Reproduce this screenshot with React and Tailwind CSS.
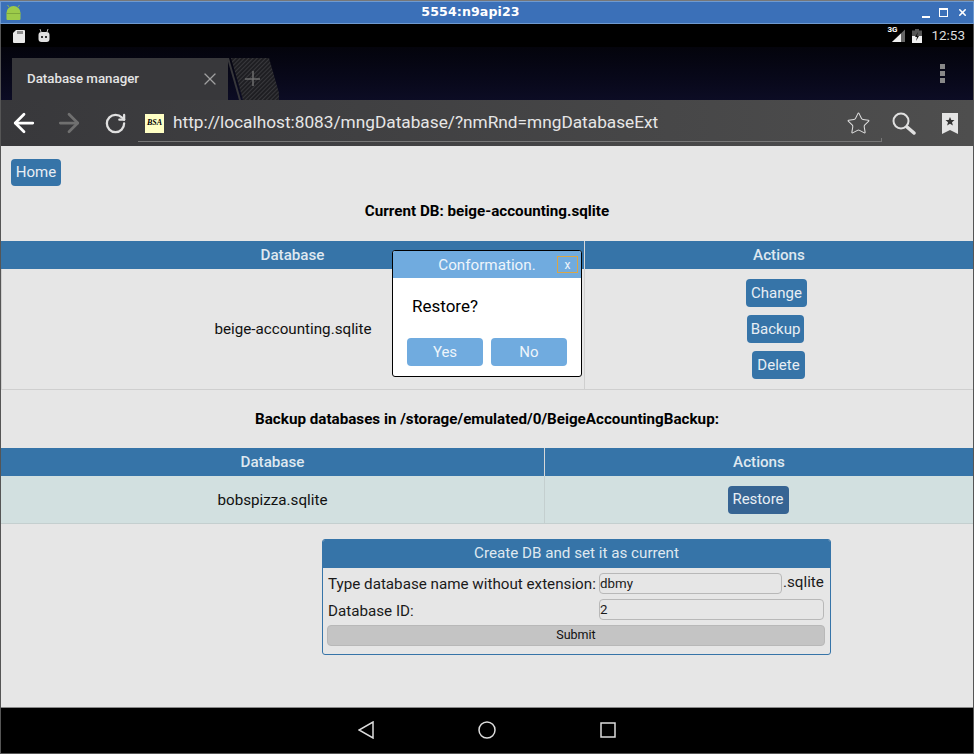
import { X, ArrowLeft, ArrowRight, RotateCw, Star } from 'lucide-react'

const ROBOTO = 'font-[Roboto,sans-serif]'

function BlueButton({ children, className = '' }) {
  return (
    <button className={`rounded-[4px] bg-[#3674a8] text-[15px] leading-none text-[#e8eef4] ${className}`}>
      {children}
    </button>
  )
}

function TitleBar() {
  return (
    <div className="flex h-[23px] items-center border border-[#6f9ad0] bg-[#3b70b8] pl-[5px] pr-[5px]">
      <svg width="15" height="15" viewBox="0 0 15 15" className="shrink-0">
        <path d="M0.500 14V8a7 7 0 0 1 14 0v6a1 1 0 0 1-1 1h-12a1 1 0 0 1-1-1z" fill="#9ccb4a" />
        <path d="M3 2L1.500 0M12 2l1.500-2" stroke="#8fb84a" strokeWidth="1" />
        <rect x="0.500" y="8" width="14" height="1" fill="#7ea83c" />
      </svg>
      <div className="flex-1 pr-[2px] text-center font-['DejaVu_Sans',sans-serif] text-[12.600px] font-bold tracking-[0.1px] text-white">
        5554:n9api23
      </div>
      <div className="flex items-center gap-[9px]">
        <span className="mt-[8px] h-[2px] w-[8px] bg-white" />
        <span className="h-[9px] w-[9px] border border-t-2 border-white" />
        <X size={11} strokeWidth={3.5} className="text-white" />
      </div>
    </div>
  )
}

function StatusBar() {
  return (
    <div className="flex h-[23px] items-center bg-black pl-[12px] pr-[8px]">
      <svg width="12" height="14" viewBox="0 0 12 14" className="mr-[13px]">
        <path d="M3 1h8a1 1 0 0 1 1 1v11a1 1 0 0 1-1 1H1a1 1 0 0 1-1-1V4z" fill="#e8e8e8" />
        <path d="M5 2v3M7 2v3M9 2v3" stroke="#333" strokeWidth="1" />
      </svg>
      <svg width="12" height="14" viewBox="0 0 12 14">
        <path d="M2 0l1 3M10 0L9 3" stroke="#bbb" strokeWidth="1" />
        <rect x="0.500" y="3" width="11" height="10" rx="3" fill="#e0e0e0" />
        <rect x="3" y="7" width="2" height="2" fill="#333" />
        <rect x="7" y="7" width="2" height="2" fill="#333" />
      </svg>
      <div className="ml-auto flex items-center">
        <span className="relative mr-[7px] block h-[15px] w-[17px]">
          <svg width="17" height="15" viewBox="0 0 17 15" className="absolute inset-0">
            <path d="M17 1.500V14H4z" fill="#666" />
            <path d="M13 5.500V14H4z" fill="#f0f0f0" />
          </svg>
          <span className="absolute -top-[2px] -left-[1px] text-[8px] font-bold leading-none text-white">3G</span>
        </span>
        <svg width="10" height="14" viewBox="0 0 10 14" className="mr-[9px]">
          <path d="M3 0h4v1.500h3V14H0V1.500h3z" fill="#555" />
          <rect y="7" width="10" height="7" fill="#f0f0f0" />
          <path d="M6 3L3 8h2l-1 4 3-5H5z" fill="#111" />
        </svg>
        <span className={`${ROBOTO} text-[13.500px] text-[#dcdcdc]`}>12:53</span>
      </div>
    </div>
  )
}

function TabStrip() {
  return (
    <div className="flex h-[53px] items-end bg-gradient-to-b from-[#04040c] to-[#0c0c24] pl-[11px] pr-[28px]">
      <div className="flex h-[42px] w-[216px] items-center bg-[#38383b] pl-[15px] pr-[8px]">
        <span className={`${ROBOTO} text-[13.300px] font-medium text-[#e4e4e4]`}>Database manager</span>
        <X size={20} strokeWidth={1.5} className="ml-auto text-[#a0a0a0]" />
      </div>
      <svg width="52" height="42" viewBox="0 0 52 42" className="-ml-[1px] shrink-0">
        <defs>
          <pattern id="hatch" width="3" height="3" patternUnits="userSpaceOnUse" patternTransform="rotate(45)">
            <rect width="3" height="3" fill="#1e1e22" />
            <rect width="1" height="3" fill="#38383c" />
          </pattern>
        </defs>
        <path d="M0 0h2L14 42H12z" fill="#38383b" />
        <path d="M4 0h38l12 42H16z" fill="url(#hatch)" />
        <path d="M26 13v15M18 21h15" stroke="#6e6e6e" strokeWidth="1.500" />
      </svg>
      <div className="mb-[17px] ml-auto flex flex-col gap-[2px]">
        <span className="h-[5px] w-[5px] bg-[#888]" />
        <span className="h-[5px] w-[5px] bg-[#888]" />
        <span className="h-[5px] w-[5px] bg-[#888]" />
      </div>
    </div>
  )
}

function Toolbar() {
  return (
    <div className="flex h-[46px] items-center bg-gradient-to-r from-[#38383b] to-[#4e4e4e] pl-[8px]">
      <ArrowLeft size={30} strokeWidth={2.2} className="text-white" />
      <ArrowRight size={30} strokeWidth={2.2} className="ml-[15px] text-[#707070]" />
      <RotateCw size={23} strokeWidth={2.4} className="ml-[20px] text-[#e0e0e0]" />
      <div className="relative ml-[11px] flex h-[42px] w-[744px] items-center self-start border-b border-[#777] pl-[7px] pt-[5px]">
        <span className="flex h-[19px] w-[19px] items-center justify-center bg-[#ffffc4] font-['Liberation_Serif',serif] text-[8px] font-bold italic text-black">
          BSA
        </span>
        <span className={`${ROBOTO} ml-[9px] text-[17.250px] text-[#e6e6e6]`}>
          http://localhost:8083/mngDatabase/?nmRnd=mngDatabaseExt
        </span>
        <Star size={25} strokeWidth={1} className="ml-auto mr-[11px] text-[#ddd]" />
        <span className="absolute bottom-0 right-0 h-[3px] w-px bg-[#777]" />
      </div>
      <svg width="24" height="23" viewBox="0 0 24 23" className="ml-[10px]">
        <circle cx="9" cy="9" r="7.500" fill="none" stroke="#e0e0e0" strokeWidth="2" />
        <path d="M15 15l7 6" stroke="#e0e0e0" strokeWidth="3.500" strokeLinecap="round" />
      </svg>
      <svg width="16" height="21" viewBox="0 0 16 21" className="ml-[26px]">
        <path d="M0 0h16v21l-8-4-8 4z" fill="#e4e4e4" />
        <path d="M8 4l1.300 3h3.200l-2.500 2.200.9 3.300L8 10.700l-2.900 1.800.9-3.300L3.500 7h3.200z" fill="#333" />
      </svg>
    </div>
  )
}

function Modal() {
  return (
    <div className="absolute left-[392px] top-[250px] w-[190px] overflow-hidden rounded-[3px] border border-black bg-white">
      <div className="relative flex h-[27px] items-center justify-center bg-[#70abdf] pt-[1px] text-[15.200px] text-[#eef5fb]">
        Conformation.
        <span className="absolute right-[3px] top-[5px] flex h-[17px] w-[21px] items-center justify-center border border-[#d9a648] text-[12px] leading-none">
          x
        </span>
      </div>
      <div className="px-[19px] pb-[22px] pt-[19px] text-[17px] leading-[19px] text-black">Restore?</div>
      <div className="flex gap-[8px] pb-[10px] pl-[14px]">
        <button className="h-[28px] w-[76px] rounded-[4px] bg-[#70abdf] text-[15px] text-[#eef5fb]">Yes</button>
        <button className="h-[28px] w-[76px] rounded-[4px] bg-[#70abdf] text-[15px] text-[#eef5fb]">No</button>
      </div>
    </div>
  )
}

function CreateForm() {
  return (
    <div className="ml-[321px] mt-[15px] w-[509px] overflow-hidden rounded-[3px] border border-[#3674a8] text-[15.200px] text-[#1a1a1a]">
      <div className="flex h-[28px] items-center justify-center bg-[#3674a8] pb-[2px] text-[#dfe8f0]">
        Create DB and set it as current
      </div>
      <div className="pb-[8px] pl-[4px] pr-[5px] pt-[5px]">
        <div className="flex h-[21px] items-center pl-[1px] pr-[1px]">
          <span className="mt-[2px] w-[271px] whitespace-nowrap">Type database name without extension:</span>
          <span className="flex h-[21px] w-[183px] items-center rounded-[4px] border border-[#b8b8b8] text-[13.300px]">
            dbmy
          </span>
          <span className="-mt-[2px] ml-[1px]">.sqlite</span>
        </div>
        <div className="mt-[5px] flex h-[21px] items-center pl-[1px]">
          <span className="mt-[3px] w-[271px]">Database ID:</span>
          <span className="flex h-[21px] w-[225px] items-center rounded-[4px] border border-[#b8b8b8] text-[13.300px]">
            2
          </span>
        </div>
        <button className="mt-[5px] h-[21px] w-full rounded-[4px] border border-[#b8b8b8] bg-[#c4c4c4] text-[12.500px] text-[#111]">
          Submit
        </button>
      </div>
    </div>
  )
}

function Header({ left, right, leftWidth }) {
  return (
    <div className="flex h-[28px] bg-[#3674a8] text-[15.200px] font-medium text-[#dfe8f0]">
      <div className={`flex items-center justify-center border-r border-[#d8d8d8] ${leftWidth}`}>{left}</div>
      <div className="flex flex-1 items-center justify-center">{right}</div>
    </div>
  )
}

export default function App() {
  return (
    <div className={`${ROBOTO} relative h-[754px] w-[974px] overflow-hidden bg-black`}>
      <div className="border-t border-[#777]">
        <TitleBar />
      </div>
      <div className="border-x border-[#555]">
        <StatusBar />
        <TabStrip />
        <Toolbar />
        <div className="h-[562px] border-b border-[#888] bg-[#e6e6e6] pt-[13px]">
          <BlueButton className="ml-[10px] h-[27px] w-[50px]">Home</BlueButton>
          <p className="mt-[17px] text-center text-[15.200px] font-bold leading-[17px] text-black">
            Current DB: beige-accounting.sqlite
          </p>
          <div className="mt-[21px] border-b border-[#cfcfcf]">
            <Header left="Database" right="Actions" leftWidth="w-[584px]" />
            <div className="flex h-[120px] border-l border-[#cfcfcf] text-[15.200px] text-[#111]">
              <div className="flex w-[582px] items-center justify-center">beige-accounting.sqlite</div>
              <div className="flex flex-1 flex-col border-l border-[#cfcfcf] pt-[10px]">
                <BlueButton className="ml-[161px] h-[28px] w-[61px]">Change</BlueButton>
                <BlueButton className="ml-[162px] mt-[8px] h-[28px] w-[57px]">Backup</BlueButton>
                <BlueButton className="ml-[167px] mt-[8px] h-[28px] w-[53px]">Delete</BlueButton>
              </div>
            </div>
          </div>
          <p className="mt-[21px] text-center text-[15.200px] font-bold leading-[17px] text-black">
            Backup databases in /storage/emulated/0/BeigeAccountingBackup:
          </p>
          <div className="mt-[20px] border-b border-[#c4cfcf]">
            <Header left="Database" right="Actions" leftWidth="w-[544px]" />
            <div className="flex h-[47px] bg-[#d2e0e0] text-[15.200px] text-[#111]">
              <div className="flex w-[543px] items-center justify-center pt-[1px]">bobspizza.sqlite</div>
              <div className="flex flex-1 items-center justify-center border-l border-[#c4cfcf] pr-[2px]">
                <button className="h-[28px] w-[61px] rounded-[4px] bg-[#366493] text-[15px] leading-none text-[#e8eef4]">
                  Restore
                </button>
              </div>
            </div>
          </div>
          <CreateForm />
        </div>
        <div className="flex h-[46px] items-center border-b border-[#555] bg-black pb-[1px] pl-[357px]">
          <svg width="16" height="18" viewBox="0 0 16 18" className="text-[#ddd]">
            <path d="M15 1v16L1 9z" fill="none" stroke="currentColor" strokeWidth="1.500" />
          </svg>
          <svg width="18" height="18" viewBox="0 0 18 18" className="ml-[104px] text-[#ddd]">
            <circle cx="9" cy="9" r="8" fill="none" stroke="currentColor" strokeWidth="1.500" />
          </svg>
          <svg width="16" height="16" viewBox="0 0 16 16" className="ml-[104px] text-[#ddd]">
            <rect x="1" y="1" width="14" height="14" fill="none" stroke="currentColor" strokeWidth="1.500" />
          </svg>
        </div>
      </div>
      <Modal />
    </div>
  )
}
